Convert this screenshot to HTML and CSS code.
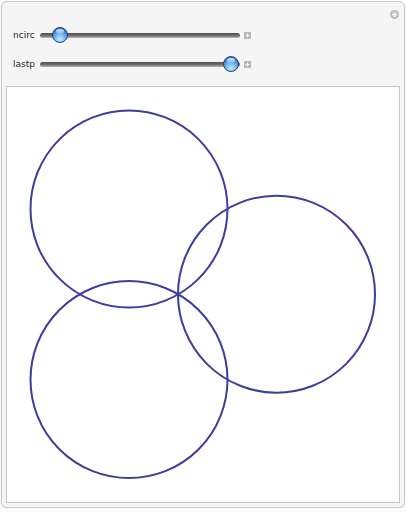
FILE: index.html
```html
<!DOCTYPE html>
<html lang="en">
<head>
  <meta charset="UTF-8" />
  <title>Manipulate</title>
  <link rel="stylesheet" href="styles.css">
</head>
<body>

  <!-- PANNELLO -->
  <div class="panel">
    <span class="corner-btn">
      <svg width="9" height="9" viewBox="0 0 9 9"><circle cx="4.5" cy="4.5" r="4.5" fill="#bdbdbd"/><path d="M4.5 2v5M2 4.5h5" stroke="#fff" stroke-width="1.6"/></svg>
    </span>

    <!-- CONTROLLI -->
    <div class="controls">
      <div class="row">
        <span class="label">ncirc</span>
        <div class="slider">
          <div class="track"></div>
          <div class="thumb" style="left: 12px;"></div>
        </div>
        <span class="plus">
          <svg width="7" height="7" viewBox="0 0 7 7"><rect width="7" height="7" fill="#b7b7b7"/><path d="M3.5 1.5v4M1.5 3.5h4" stroke="#fff" stroke-width="1"/></svg>
        </span>
      </div>
      <div class="row">
        <span class="label">lastp</span>
        <div class="slider">
          <div class="track"></div>
          <div class="thumb" style="left: 183px;"></div>
        </div>
        <span class="plus">
          <svg width="7" height="7" viewBox="0 0 7 7"><rect width="7" height="7" fill="#b7b7b7"/><path d="M3.5 1.5v4M1.5 3.5h4" stroke="#fff" stroke-width="1"/></svg>
        </span>
      </div>
    </div>

    <!-- GRAFICO -->
    <div class="output">
      <svg width="394" height="417" viewBox="0 0 394 417">
        <g fill="none" stroke="#3d3d9e" stroke-width="2">
          <circle cx="122" cy="122" r="98.5"/>
          <circle cx="269.5" cy="207.2" r="98.5"/>
          <circle cx="122" cy="292.6" r="98.5"/>
        </g>
      </svg>
    </div>
  </div>

</body>
</html>
```

FILE: styles.css
```css
body {
  margin: 0;
  background: #fcfafa;
  font-family: "DejaVu Sans", sans-serif;
}
.panel {
  position: relative;
  margin: 1px 0 0 1px;
  width: 402px;
  height: 505px;
  border: 1px solid #c9c9c9;
  border-radius: 6px;
  background: #f5f5f5;
  box-shadow: 0 1px 1px rgba(0, 0, 0, 0.08);
}
.corner-btn {
  position: absolute;
  top: 8px;
  right: 5px;
  line-height: 0;
}
.controls {
  display: flex;
  flex-direction: column;
  gap: 13px;
  padding: 25px 0 14px 11px;
}
.row {
  display: flex;
  align-items: center;
  height: 16px;
}
.label {
  width: 27px;
  font-size: 9px;
  color: #1e1e1e;
}
.slider {
  position: relative;
  width: 200px;
  height: 16px;
}
.track {
  margin-top: 6px;
  height: 5px;
  border-radius: 3px;
  background: linear-gradient(#4b4b4b, #767676 60%, #b9b9b9);
}
.thumb {
  position: absolute;
  top: 0;
  width: 14px;
  height: 14px;
  border: 1px solid #1f4282;
  border-radius: 50%;
  background: radial-gradient(circle at 50% 80%, #c9efff 0%, #79bdf4 35%, #2f78d0 75%, #1c4f9e 100%);
}
.thumb::after {
  content: "";
  position: absolute;
  top: 1px;
  left: 3px;
  width: 8px;
  height: 5px;
  border-radius: 50%;
  background: linear-gradient(rgba(255, 255, 255, 0.9), rgba(255, 255, 255, 0.15));
}
.plus {
  margin-left: 4px;
  line-height: 0;
}
.output {
  margin: 0 4px;
  height: 415px;
  border: 1px solid #c6c6c6;
  background: #fff;
  line-height: 0;
}
```
